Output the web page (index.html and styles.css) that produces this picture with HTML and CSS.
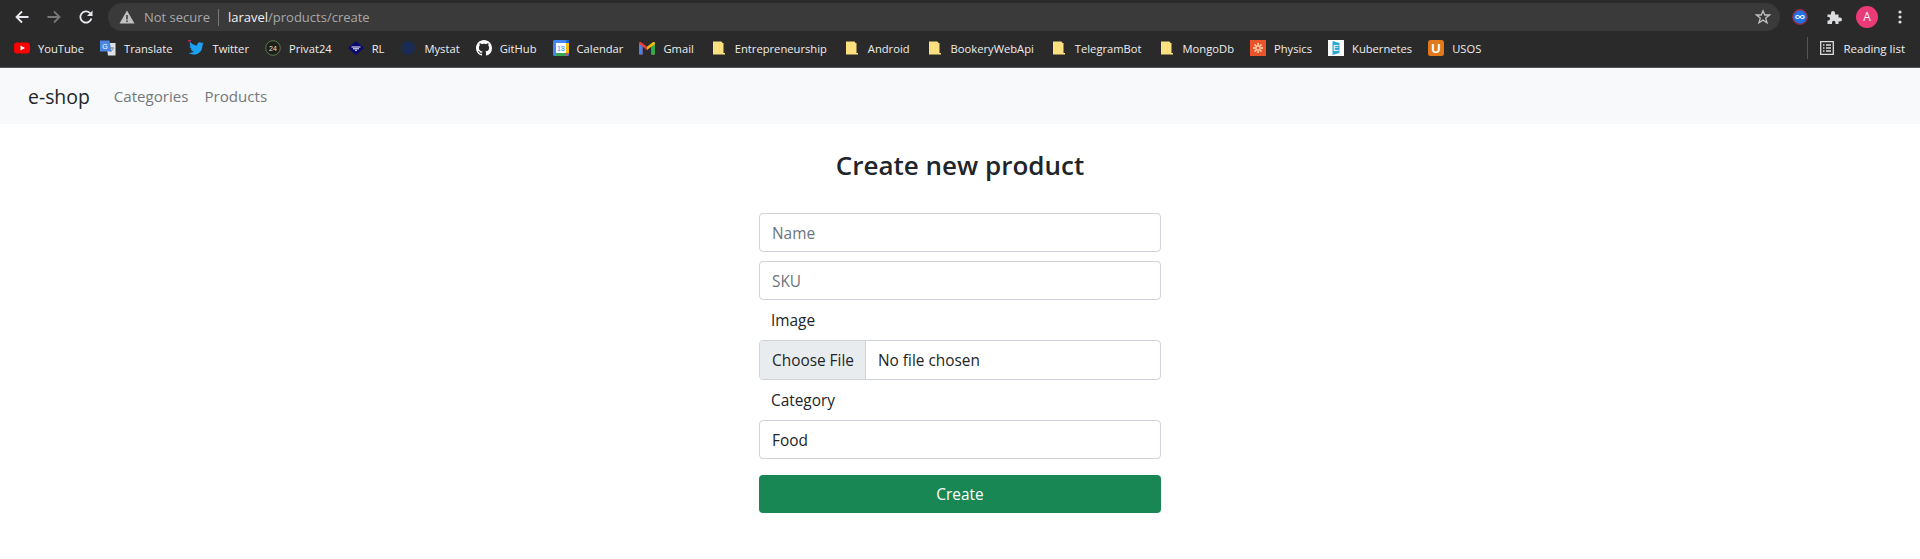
FILE: index.html
```html
<!DOCTYPE html>
<html lang="en">
<head>
    <meta charset="UTF-8">
    <title>Create new product</title>
    <link rel="stylesheet" href="styles.css">
</head>
<body>
    <!-- Browser toolbar -->
    <div class="toolbar">
        <svg class="tool-icon" viewBox="0 0 16 16"><path d="M14.5 8H2.5M8 2.5L2.5 8L8 13.5" fill="none" stroke="#e8eaed" stroke-width="1.8"/></svg>
        <svg class="tool-icon" viewBox="0 0 16 16"><path d="M1.5 8H13.5M8 2.5L13.5 8L8 13.5" fill="none" stroke="#77787a" stroke-width="1.8"/></svg>
        <svg class="tool-icon tool-reload" viewBox="0 0 16 16"><path d="M13.4 9.5A5.6 5.6 0 1 1 12 4.1" fill="none" stroke="#e8eaed" stroke-width="1.8"/><path d="M14.5 1.5V7H9z" fill="#e8eaed"/></svg>
        <div class="omnibox">
            <svg class="warn-icon" viewBox="0 0 16 16"><path d="M8 1.5L15.5 14.5H.5z" fill="#c0c1c3"/><path d="M8 6v4.5M8 11.5v1.5" stroke="#3a3a3a" stroke-width="1.5"/></svg>
            <span class="not-secure">Not secure</span>
            <span class="url"><b>laravel</b>/products/create</span>
            <svg class="star-icon" viewBox="0 0 16 16"><path d="M8 1.8L9.8 6H14.5L10.7 9L12 13.8L8 11.1L4 13.8L5.3 9L1.5 6H6.2z" fill="none" stroke="#bdbebf" stroke-width="1.3"/></svg>
        </div>
        <div class="ext-icons">
            <svg class="ext-icon" viewBox="0 0 16 16"><circle cx="8" cy="8" r="7.2" fill="#1f73e8" stroke="#8f2f4a" stroke-width="1.4"/><path d="M8 8C6.8 6 3.8 6 3.8 8S6.8 10 8 8S12.2 6 12.2 8S9.2 10 8 8z" fill="none" stroke="#fff" stroke-width="1.2"/></svg>
            <svg class="ext-icon" viewBox="0 0 16 16"><path d="M1.5 5.5H5V4A2 2 0 0 1 9 4V5.5H12.5V8.5H14A2 2 0 0 1 14 12.5H12.5V15H9.5V13.5A1.7 1.7 0 0 0 6 13.5V15H1.5V11.5H3A2 2 0 0 0 3 8H1.5z" fill="#dcdddf"/></svg>
            <div class="avatar">A</div>
            <svg class="menu-icon" viewBox="0 0 4 16"><circle cx="2" cy="3" r="1.6" fill="#dcdddf"/><circle cx="2" cy="8" r="1.6" fill="#dcdddf"/><circle cx="2" cy="13" r="1.6" fill="#dcdddf"/></svg>
        </div>
    </div>

    <!-- Bookmarks -->
    <div class="bookmarks">
        <div class="bookmark"><svg viewBox="0 0 16 16"><rect y="2.5" width="16" height="11" rx="3" fill="#f00"/><path d="M6.5 5.5L11 8L6.5 10.5z" fill="#fff"/></svg>YouTube</div>
        <div class="bookmark"><svg viewBox="0 0 16 16"><path d="M6 3H15.5V15.5H8z" fill="#dfe1e5"/><path d="M0 .5H9.500L11.500 11.500H0z" fill="#4a86e0"/><path d="M10 8h4M12 7v1.500M10.500 12L13.500 8.500" stroke="#8a8d93" fill="none"/><text class="icon-text" x="5" y="8.500" font-size="7" fill="#fff">G</text></svg>Translate</div>
        <div class="bookmark"><svg viewBox="0 0 16 16"><path d="M16 3.500C15 4 14.500 4 14.300 4.100C15 3.600 15.400 3 15.600 2.300C15 2.700 14.300 2.900 13.600 3.100C12 1.300 8.800 2.500 9.300 5.500C6.500 5.400 4 4 2.200 2C1.300 3.500 1.800 5.400 3.200 6.400C2.700 6.400 2.100 6.200 1.700 6C1.700 7.600 2.800 8.900 4.300 9.200C3.800 9.400 3.300 9.400 2.800 9.300C3.200 10.600 4.500 11.500 5.800 11.600C4.300 12.800 2.500 13.200 .6 13C6.500 16.600 14.800 13.500 14.400 5.100C15 4.700 15.600 4.100 16 3.500z" fill="#1da1f2"/><circle cx="1.500" cy=".5" r="1.300" fill="#e0245e"/></svg>Twitter</div>
        <div class="bookmark"><svg viewBox="0 0 16 16"><circle cx="8" cy="8" r="7.300" fill="#1c1f1a" stroke="#5c7a4e"/><text class="icon-text" x="8" y="10.500" font-size="7" fill="#e4e4e4">24</text></svg>Privat24</div>
        <div class="bookmark"><svg viewBox="0 0 16 16"><path d="M8 1L16 8L8 15L0 8z" fill="#0a0a6e"/><path d="M3.500 7H12.500M5 8.800H11M7 10.300H9" stroke="#fff"/></svg>RL</div>
        <div class="bookmark"><svg viewBox="0 0 16 16"><circle cx="8" cy="8" r="7" fill="#1b2c52"/></svg>Mystat</div>
        <div class="bookmark"><svg viewBox="0 0 16 16"><path fill="#fff" d="M8 0C3.580 0 0 3.580 0 8c0 3.540 2.290 6.530 5.470 7.590.4.070.55-.17.55-.38 0-.19-.01-.82-.01-1.490-2.010.37-2.530-.49-2.690-.94-.09-.23-.48-.94-.82-1.130-.28-.15-.68-.52-.01-.53.63-.01 1.080.58 1.230.82.72 1.210 1.870.87 2.330.66.070-.52.280-.87.510-1.070-1.780-.2-3.640-.89-3.640-3.950 0-.87.310-1.590.820-2.150-.080-.2-.36-1.020.080-2.120 0 0 .67-.21 2.200.82.640-.18 1.320-.27 2-.27s1.360.09 2 .27c1.530-1.040 2.200-.82 2.200-.82.440 1.100.160 1.920.080 2.120.510.560.820 1.270.820 2.150 0 3.070-1.870 3.750-3.650 3.950.290.250.540.730.540 1.480 0 1.070-.010 1.930-.010 2.200 0 .210.150.460.550.380A8.010 8.010 0 0 0 16 8c0-4.420-3.580-8-8-8z"/></svg>GitHub</div>
        <div class="bookmark"><svg viewBox="0 0 16 16"><rect width="16" height="16" rx="1.500" fill="#4285f4"/><rect x="3" y="3" width="10" height="10" fill="#fff"/><path d="M13 0H16V3H13z" fill="#1967d2"/><path d="M13 3H16V13H13z" fill="#fbbc04"/><path d="M3 13H13V16H3z" fill="#34a853"/><path d="M13 13H16L13 16z" fill="#ea4335"/><text class="icon-text" x="8" y="10.500" font-size="7" fill="#4285f4">18</text></svg>Calendar</div>
        <div class="bookmark bookmark-gmail"><svg viewBox="0 0 16 13"><path d="M0 1.500C0 0 1.500-.3 2.500.5L8 4.800V8L3.500 4.500V12.500H1C.4 12.500 0 12 0 11.500z" fill="#ea4335"/><path d="M0 2L3.500 4.500V12.500H1C.4 12.500 0 12 0 11.500z" fill="#4285f4"/><path d="M16 1.500C16 0 14.500-.3 13.500.5L8 4.800V8L12.500 4.500V12.500H15C15.600 12.500 16 12 16 11.500z" fill="#fbbc04"/><path d="M16 2L12.500 4.500V12.500H15C15.600 12.500 16 12 16 11.500z" fill="#34a853"/></svg>Gmail</div>
        <div class="bookmark bookmark-folder"><svg viewBox="0 0 12 14"><path d="M0 .5H8.500L9.500 2H10.500V12H12V13.500H0z" fill="#fcdf7f"/></svg>Entrepreneurship</div>
        <div class="bookmark bookmark-folder"><svg viewBox="0 0 12 14"><path d="M0 .5H8.500L9.500 2H10.500V12H12V13.500H0z" fill="#fcdf7f"/></svg>Android</div>
        <div class="bookmark bookmark-folder"><svg viewBox="0 0 12 14"><path d="M0 .5H8.500L9.500 2H10.500V12H12V13.500H0z" fill="#fcdf7f"/></svg>BookeryWebApi</div>
        <div class="bookmark bookmark-folder"><svg viewBox="0 0 12 14"><path d="M0 .5H8.500L9.500 2H10.500V12H12V13.500H0z" fill="#fcdf7f"/></svg>TelegramBot</div>
        <div class="bookmark bookmark-folder"><svg viewBox="0 0 12 14"><path d="M0 .5H8.500L9.500 2H10.500V12H12V13.500H0z" fill="#fcdf7f"/></svg>MongoDb</div>
        <div class="bookmark"><svg viewBox="0 0 16 16"><rect width="16" height="16" fill="#e8552a"/><path d="M8 3V13M3 8H13M4.500 4.500L11.500 11.500M11.500 4.500L4.500 11.500" stroke="#fbd7b5" stroke-width="1.500"/><circle cx="8" cy="8" r="1.500" fill="#e8552a"/></svg>Physics</div>
        <div class="bookmark"><svg viewBox="0 0 16 16"><rect width="16" height="16" fill="#fff"/><path d="M4.500 1L11.500 3V13L4.500 15z" fill="#29a9d6"/><text class="icon-text" x="8" y="11" font-size="9" fill="#fff">E</text></svg>Kubernetes</div>
        <div class="bookmark"><svg viewBox="0 0 16 16"><rect width="16" height="16" rx="2.500" fill="#e2781c"/><text class="icon-text icon-text-bold" x="8" y="12.500" font-size="13" fill="#fff">U</text></svg>USOS</div>
        <div class="reading-list">
            <svg viewBox="0 0 14 14"><path d="M.7.7H13.300V13.300H.7z" fill="none" stroke="#dcdddf" stroke-width="1.300"/><path d="M3 4H4.500M6 4H11M3 7H4.500M6 7H11M3 10H4.500M6 10H11" stroke="#dcdddf" stroke-width="1.300"/></svg>
            Reading list
        </div>
    </div>

    <!-- Navbar -->
    <nav class="navbar">
        <a class="brand" href="#">e-shop</a>
        <a class="nav-link" href="#">Categories</a>
        <a class="nav-link" href="#">Products</a>
    </nav>

    <main class="content">
        <h1>Create new product</h1>
        <form class="product-form">
            <input class="form-control" type="text" placeholder="Name">
            <input class="form-control no-gap" type="text" placeholder="SKU">
            <label class="form-label" for="image">Image</label>
            <input class="form-control file-control no-gap" id="image" type="file">
            <label class="form-label" for="category">Category</label>
            <select class="form-control category-select" id="category">
                <option>Food</option>
            </select>
            <button class="btn-create" type="button">Create</button>
        </form>
    </main>
</body>
</html>
```

FILE: styles.css
```css
* {
    box-sizing: border-box;
}

body {
    margin: 0;
    font-family: 'Open Sans', 'Noto Sans', sans-serif;
    font-size: 15.4px;
    color: #212529;
    background-color: white;
}

/* Browser chrome */
.toolbar {
    display: flex;
    align-items: center;
    height: 34px;
    padding: 3px 0 3px 14px;
    background-color: #2a2a2a;
}

.tool-icon {
    width: 16px;
    height: 16px;
    margin-right: 16px;
    flex-shrink: 0;
}

.tool-reload {
    margin-right: 14px;
}

.omnibox {
    flex: 1;
    display: flex;
    align-items: center;
    height: 28px;
    padding: 0 9px 0 11px;
    border-radius: 14px;
    background-color: #3a3a3a;
    font-size: 13px;
}

.warn-icon {
    width: 16px;
    height: 16px;
    margin-right: 9px;
}

.not-secure {
    padding-right: 8px;
    border-right: 1px solid #77787a;
    color: #a8a9ab;
    line-height: 17px;
}

.url {
    flex: 1;
    padding-left: 9px;
    color: #a8a9ab;
}

.url b {
    font-weight: 400;
    color: #f1f1f1;
}

.star-icon {
    width: 16px;
    height: 16px;
}

.ext-icons {
    display: flex;
    align-items: center;
    width: 140px;
    padding-left: 12px;
}

.ext-icon {
    width: 16px;
    height: 16px;
    margin-right: 18px;
}

.avatar {
    width: 22px;
    height: 22px;
    margin-left: -4px;
    margin-right: 20px;
    border-radius: 50%;
    background-color: #ea3a78;
    color: #f5f5f5;
    font-size: 12px;
    line-height: 22px;
    text-align: center;
}

.menu-icon {
    width: 4px;
    height: 16px;
}

.bookmarks {
    display: flex;
    align-items: center;
    height: 34px;
    padding: 0 0 5px 14px;
    border-bottom: 1px solid #555;
    background-color: #2a2a2a;
    color: #eeeeee;
    font-size: 11.2px;
}

.bookmark {
    display: flex;
    align-items: center;
    margin-right: 16px;
    white-space: nowrap;
}

.bookmark svg {
    width: 16px;
    height: 16px;
    margin-right: 8px;
}

.icon-text {
    font-family: 'Liberation Sans', sans-serif;
    text-anchor: middle;
}

.icon-text-bold {
    font-weight: 700;
}

.bookmark-gmail svg {
    height: 13px;
}

.bookmark-folder {
    margin-left: 3px;
}

.bookmark-folder svg {
    width: 12px;
    height: 14px;
    margin-right: 10px;
}

.reading-list {
    display: flex;
    align-items: center;
    margin-left: auto;
    height: 22px;
    padding: 0 15px 0 12px;
    border-left: 1px solid #555;
    font-size: 11.5px;
}

.reading-list svg {
    width: 14px;
    height: 14px;
    margin-right: 9px;
}

/* Navbar */
.navbar {
    display: flex;
    align-items: center;
    height: 56px;
    padding: 0 20px 0 28px;
    background-color: #f8f9fa;
}

.brand {
    margin-right: 16px;
    color: #212529;
    font-size: 19.4px;
    text-decoration: none;
}

.nav-link {
    padding: 8px;
    color: #74787c;
    font-size: 15.1px;
    text-decoration: none;
}

/* Form */
.content {
    display: flex;
    flex-direction: column;
    align-items: center;
    padding-top: 22px;
}

h1 {
    margin: 0 0 29px 0;
    font-size: 26px;
    font-weight: 600;
    line-height: 38px;
}

.product-form {
    display: flex;
    flex-direction: column;
    width: 402px;
}

.form-control {
    width: 100%;
    height: 39px;
    margin-bottom: 9px;
    padding: 7px 12px 5px;
    border: 1px solid #ced4da;
    border-radius: 4px;
    background-color: white;
    color: #212529;
    font-family: inherit;
    font-size: 15.4px;
    appearance: none;
}

.form-control::placeholder {
    color: #6c757d;
}

.no-gap {
    margin-bottom: 0;
}

.file-control {
    height: 40px;
    padding: 0 12px 0 0;
    line-height: 38px;
    overflow: hidden;
}

.file-control::file-selector-button {
    height: 38px;
    margin-right: 12px;
    padding: 0 11px 0 12px;
    border: none;
    border-right: 1px solid #ced4da;
    background-color: #e9ecef;
    color: #212529;
    font-family: inherit;
    font-size: 15.4px;
}

.form-label {
    height: 40px;
    padding: 10px 12px 0;
    line-height: 21px;
}

.category-select {
    margin-bottom: 16px;
}

.btn-create {
    height: 38px;
    padding-top: 2px;
    border: none;
    border-radius: 4px;
    background-color: #198754;
    color: white;
    font-family: inherit;
    font-size: 15.4px;
}
```
